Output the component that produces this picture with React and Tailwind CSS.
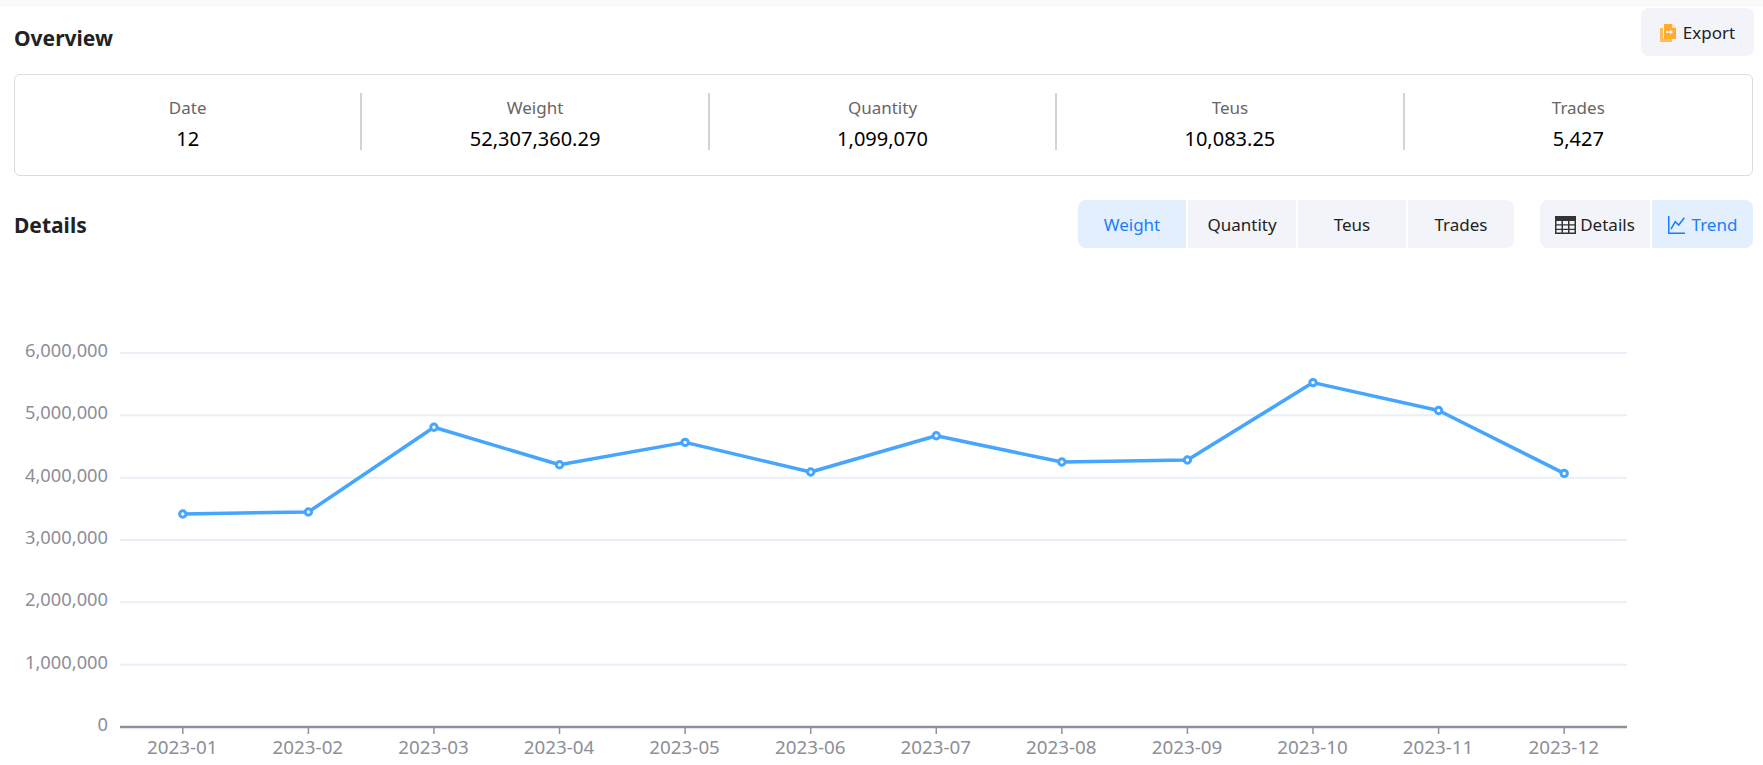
const FONT = "font-['Noto_Sans','Open_Sans',sans-serif]";

const stats = [
  { label: 'Date', value: '12' },
  { label: 'Weight', value: '52,307,360.29' },
  { label: 'Quantity', value: '1,099,070' },
  { label: 'Teus', value: '10,083.25' },
  { label: 'Trades', value: '5,427' },
];

const metrics = [
  { name: 'Weight', width: 'w-[108px]' },
  { name: 'Quantity', width: 'w-[110px]' },
  { name: 'Teus', width: 'w-[110px]' },
  { name: 'Trades', width: 'w-[108px]' },
];
const months = ['01', '02', '03', '04', '05', '06', '07', '08', '09', '10', '11', '12'];
const yTicks = ['6,000,000', '5,000,000', '4,000,000', '3,000,000', '2,000,000', '1,000,000'];
const pointY = [514, 512, 427.2, 464.8, 442.4, 472, 435.8, 462, 460, 382.6, 410.5, 473.4];

const pointX = (i) => 120 + 125.58 * (i + 0.5);
const gridY = (i) => 353 + 62.33 * i;

function ExportIcon() {
  return (
    <svg width="16" height="18" viewBox="0 0 16 18">
      <path d="M0 4h3v10.500h9V18H1a1 1 0 0 1-1-1z" fill="#fdbb5c" />
      <path d="M4 0h8l4 4v10.500a.5.5 0 0 1-.5.5H4z" fill="#ffac2f" />
      <path d="M12 0l4 4h-4z" fill="#ffe0ae" />
      <path d="M6 7.200h4V5.500l3 2.500-3 2.500V8.800H6z" fill="#fff" />
    </svg>
  );
}

function TableIcon() {
  return (
    <svg width="21" height="18" viewBox="0 0 21 18">
      <path d="M0 0h21v18H0z" fill="#333" />
      <path d="M1.500 5h5v3.200h-5zM8 5h5v3.200H8zM14.500 5h5v3.200h-5zM1.500 9.500h5v3.200h-5zM8 9.500h5v3.200H8zM14.500 9.500h5v3.200h-5zM1.500 14h5v2.500h-5zM8 14h5v2.500H8zM14.500 14h5v2.500h-5z" fill="#f2f4f9" />
    </svg>
  );
}

function TrendIcon() {
  return (
    <svg width="17" height="18" viewBox="0 0 17 18" fill="none" stroke="#1a7dff" strokeWidth="1.500">
      <path d="M.75 0v17.250H17" />
      <path d="M3 13l4.300-7.300 3.400 3.300 5.600-7.300" />
    </svg>
  );
}

function Chart() {
  const line = pointY.map((y, i) => `${pointX(i)},${y}`).join(' ');
  return (
    <svg width="1763" height="505" viewBox="0 260 1763 505" className="block">
      <g fontFamily="'Noto Sans', sans-serif" fill="#8c8e98">
        {yTicks.map((t, i) => (
          <g key={t}>
            <line x1="120" x2="1627" y1={gridY(i)} y2={gridY(i)} stroke="#ebeef8" strokeWidth="2" />
            <text x="108" y={gridY(i) + 4} textAnchor="end" fontSize="18.300">{t}</text>
          </g>
        ))}
        <text x="108" y="731" textAnchor="end" fontSize="18.300">0</text>
        <line x1="120" x2="1627" y1="727" y2="727" stroke="#8f929c" strokeWidth="2.500" />
        {months.map((m, i) => (
          <g key={m}>
            <line x1={pointX(i)} x2={pointX(i)} y1="727" y2="734" stroke="#8f929c" strokeWidth="1.500" />
            <text x={pointX(i) - 0.500} y="754" textAnchor="middle" fontSize="18.800">2023-{m}</text>
          </g>
        ))}
      </g>
      <polyline points={line} fill="none" stroke="#45a5ff" strokeWidth="3.500" strokeLinejoin="round" />
      {pointY.map((y, i) => (
        <circle key={i} cx={pointX(i)} cy={y} r="3.200" fill="#fff" stroke="#45a5ff" strokeWidth="3" />
      ))}
    </svg>
  );
}

export default function App() {
  return (
    <div className={`w-[1763px] h-[765px] overflow-hidden bg-white ${FONT}`}>
      <div className="h-[7px] bg-[#fafafa]" />
      <div className="ml-[14px] w-[1740px]">
        <div className="flex items-start justify-between pt-[1px]">
          <h2 className="mt-[11px] mb-[1px] text-[21px] leading-[38px] font-bold text-[#222]">Overview</h2>
          <button className="flex h-[48px] w-[113px] items-center justify-center gap-[7px] rounded-[8px] bg-[#f2f4f9] pt-[1px] text-[17px] text-[#222]">
            <ExportIcon />
            Export
          </button>
        </div>

        <div className="mt-[16px] grid h-[102px] w-[1739px] grid-cols-5 rounded-[6px] border border-[#dcdcdc] pt-[18px]">
          {stats.map((s, i) => (
            <div key={s.label} className={`h-[57px] text-center ${i < 4 ? 'border-r-2 border-[#d4d4d4]' : ''}`}>
              <div className="pt-[1px] text-[17px] leading-[28px] text-[#666]">{s.label}</div>
              <div className="mt-[1px] text-[20px] leading-[32px] text-black">{s.value}</div>
            </div>
          ))}
        </div>

        <div className="mt-[24px] flex h-[48px] items-center pr-[1px]">
          <h2 className="pt-[4px] text-[21px] font-bold text-[#222]">Details</h2>
          <div className="ml-auto flex overflow-hidden rounded-[8px]">
            {metrics.map((m, i) => (
              <div
                key={m.name}
                className={`flex h-[48px] ${m.width} items-center justify-center pt-[1px] text-[17px] ${i > 0 ? 'border-l-2 border-white' : ''} ${i === 0 ? 'bg-[#e3effd] text-[#1a7dff]' : 'bg-[#f2f4f9] text-[#222]'}`}
              >
                {m.name}
              </div>
            ))}
          </div>
          <div className="ml-[26px] flex overflow-hidden rounded-[8px]">
            <div className="flex h-[48px] w-[110px] items-center justify-center gap-[4px] bg-[#f2f4f9] pt-[1px] text-[17px] text-[#222]">
              <TableIcon />
              Details
            </div>
            <div className="flex h-[48px] w-[103px] items-center justify-center gap-[7px] border-l-2 border-white bg-[#e3effd] pt-[1px] text-[17px] text-[#1a7dff]">
              <TrendIcon />
              Trend
            </div>
          </div>
        </div>
      </div>
      <div className="mt-[12px]">
        <Chart />
      </div>
    </div>
  );
}
